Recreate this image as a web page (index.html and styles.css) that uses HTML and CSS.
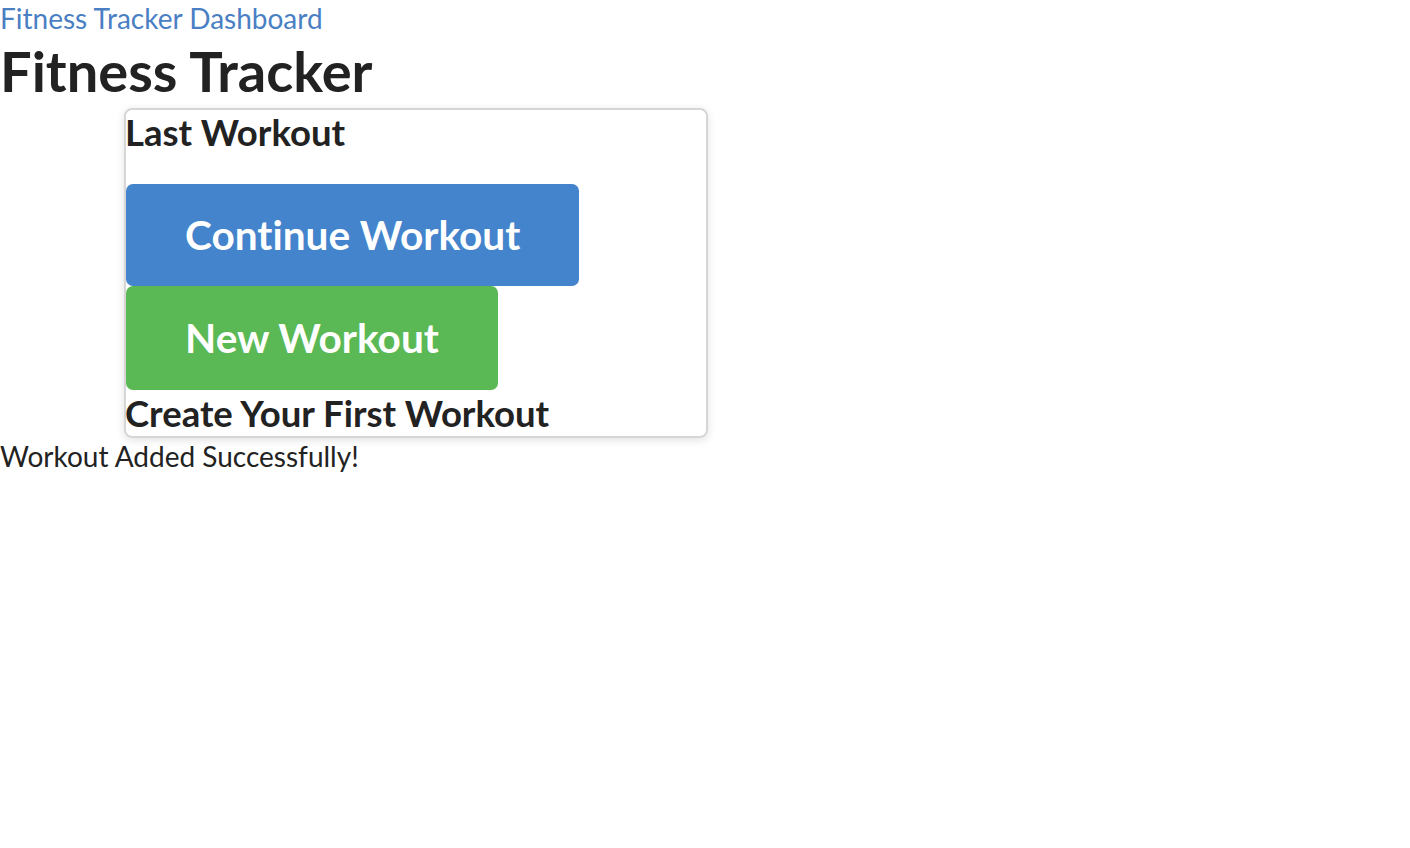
FILE: index.html
```html
<!DOCTYPE html>
<html>
<head>
<meta charset="utf-8">
<link rel="stylesheet" href="styles.css">
</head>
<body>
<div class="page">
  <div class="brand">Fitness Tracker Dashboard</div>
  <h1 class="title">Fitness Tracker</h1>
  <div class="card">
    <h2 class="card-heading">Last Workout</h2>
    <div class="actions">
      <button class="btn btn-blue">Continue Workout</button>
      <button class="btn btn-green">New Workout</button>
    </div>
    <h2 class="card-heading card-heading-bottom">Create Your First Workout</h2>
  </div>
  <p class="toast">Workout Added Successfully!</p>
</div>
</body>
</html>
```
FILE: styles.css
```css
html, body {
  margin: 0;
  padding: 0;
  background: #ffffff;
}
body {
  font-family: Lato, "Liberation Sans", sans-serif;
  font-variant-ligatures: no-common-ligatures;
  color: #222222;
}
.page {
  display: flex;
  flex-direction: column;
  align-items: flex-start;
}
.brand {
  font-size: 28px;
  line-height: 30px;
  margin-top: 3px;
  color: #4a7fc4;
}
.title {
  margin: 0;
  font-size: 56px;
  line-height: 75px;
  font-weight: 700;
  color: #222222;
}
.card {
  margin-left: 124px;
  width: 584px;
  box-sizing: border-box;
  border: 2px solid #d6d6d6;
  border-radius: 8px;
  box-shadow: 0 2px 8px rgba(0, 0, 0, 0.12);
  display: flex;
  flex-direction: column;
  align-items: flex-start;
}
.card-heading {
  margin: 0 0 0 -1px;
  font-size: 36.5px;
  line-height: 44px;
  font-weight: 700;
  color: #222222;
}
.actions {
  margin-top: 30px;
  display: flex;
  flex-direction: column;
  align-items: flex-start;
}
.btn {
  border: none;
  border-radius: 7px;
  font-family: Lato, "Liberation Sans", sans-serif;
  font-variant-ligatures: no-common-ligatures;
  font-size: 40.6px;
  font-weight: 700;
  line-height: 48px;
  color: #ffffff;
  padding: 27px 59px;
  cursor: pointer;
}
.btn-blue {
  background: #4384cc;
}
.btn-green {
  background: #5ab955;
  padding-top: 28px;
  padding-bottom: 28px;
}
.card-heading-bottom {
  line-height: 46px;
}
.toast {
  margin: 0;
  font-size: 28px;
  line-height: 36px;
  color: #222222;
}
```
